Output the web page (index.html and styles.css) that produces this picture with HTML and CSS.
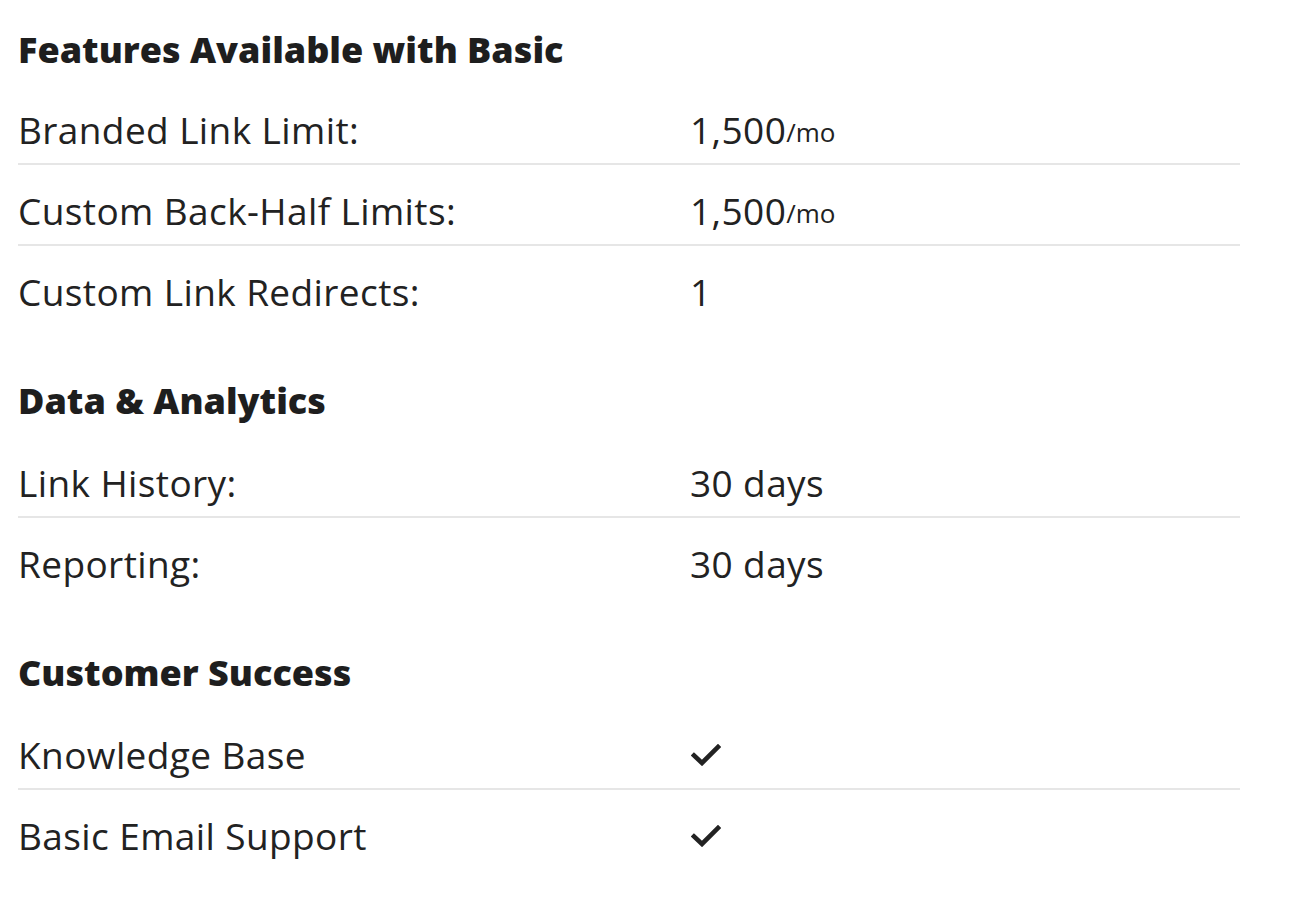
FILE: index.html
```html
<!DOCTYPE html>
<html lang="en">
<head>
<meta charset="utf-8">
<title>Features Available with Basic</title>
<link rel="stylesheet" href="styles.css">
</head>
<body>
<main class="page">
  <section class="group">
    <h2 class="group-title">Features Available with Basic</h2>
    <div class="row"><span class="label">Branded Link Limit:</span><span class="value">1,500<small class="unit">/mo</small></span></div>
    <div class="row"><span class="label">Custom Back-Half Limits:</span><span class="value">1,500<small class="unit">/mo</small></span></div>
    <div class="row"><span class="label">Custom Link Redirects:</span><span class="value">1</span></div>
  </section>
  <section class="group">
    <h2 class="group-title">Data &amp; Analytics</h2>
    <div class="row"><span class="label">Link History:</span><span class="value">30 days</span></div>
    <div class="row"><span class="label">Reporting:</span><span class="value">30 days</span></div>
  </section>
  <section class="group">
    <h2 class="group-title">Customer Success</h2>
    <div class="row"><span class="label">Knowledge Base</span><span class="value"><svg class="check" viewBox="0 0 30 22" aria-hidden="true"><path d="M3 11.5 L11 19 L27 3" fill="none" stroke="#222" stroke-width="4.6" stroke-linecap="square" stroke-linejoin="miter"/></svg></span></div>
    <div class="row"><span class="label">Basic Email Support</span><span class="value"><svg class="check" viewBox="0 0 30 22" aria-hidden="true"><path d="M3 11.5 L11 19 L27 3" fill="none" stroke="#222" stroke-width="4.6" stroke-linecap="square" stroke-linejoin="miter"/></svg></span></div>
  </section>
</main>
</body>
</html>
```

FILE: styles.css
```css
html, body {
  margin: 0;
  padding: 0;
  background: #ffffff;
}

body {
  font-family: "Open Sans", "Noto Sans", sans-serif;
  color: #222222;
  font-variant-ligatures: none;
}

.page {
  width: 1222px;
  padding: 30px 0 0 18px;
}

.group + .group {
  margin-top: 56px;
}

.group-title {
  margin: 0 0 14px;
  font-size: 36px;
  line-height: 40px;
  font-weight: 800;
  color: #1e1e1e;
}

.group + .group .group-title {
  margin-bottom: 16px;
}

.row {
  display: grid;
  grid-template-columns: 672px 1fr;
  height: 79px;
  border-bottom: 2px solid #e6e6e6;
}

.row:last-child {
  border-bottom: none;
}

.label,
.value {
  display: flex;
  align-items: center;
  align-self: start;
  height: 40px;
  margin-top: 26px;
  font-size: 37px;
  line-height: 40px;
  font-weight: 400;
  letter-spacing: 0.4px;
}

.unit {
  font-size: 26px;
  align-self: flex-end;
  line-height: 36px;
  letter-spacing: 0;
}

.check {
  width: 30px;
  height: 22px;
  display: block;
  margin-left: 1px;
}
```
